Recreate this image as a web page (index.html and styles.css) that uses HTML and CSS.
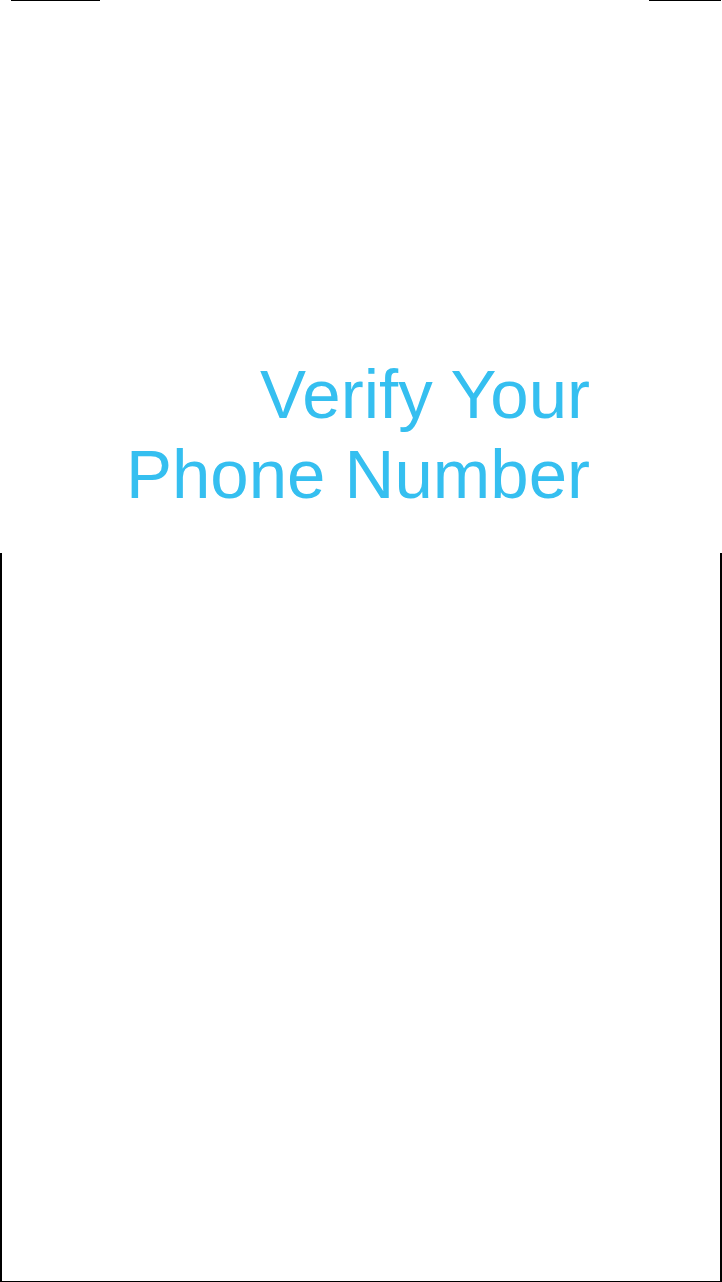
FILE: index.html
```html
<!DOCTYPE html>
<html lang="en">
<head>
<meta charset="utf-8">
<title>Verify Your Phone Number</title>
<link rel="stylesheet" href="styles.css">
</head>
<body>
<div class="page">
  <div class="topbar">
    <span class="tick tick-left"></span>
    <span class="tick tick-right"></span>
  </div>
  <h1 class="title">Verify Your<br>Phone Number</h1>
  <div class="panel"></div>
</div>
</body>
</html>
```
FILE: styles.css
```css
html, body {
  margin: 0;
  padding: 0;
  background: #ffffff;
}

.page {
  width: 722px;
  height: 1282px;
  display: flex;
  flex-direction: column;
  font-family: "Liberation Sans", Arial, sans-serif;
  overflow: hidden;
}

.topbar {
  display: flex;
  justify-content: space-between;
  height: 1px;
  padding: 0 1px 0 11px;
}

.tick {
  display: block;
  height: 1px;
  background: #000000;
}

.tick-left {
  width: 89px;
}

.tick-right {
  width: 72px;
}

.title {
  margin: 354px 0 0 0;
  padding-right: 132px;
  text-align: right;
  font-size: 69px;
  line-height: 80px;
  font-weight: normal;
  color: #35bff0;
}

.panel {
  margin-top: 38px;
  flex: 1;
  border-left: 2px solid #000000;
  border-right: 2px solid #000000;
  border-bottom: 1px solid #000000;
}
```
